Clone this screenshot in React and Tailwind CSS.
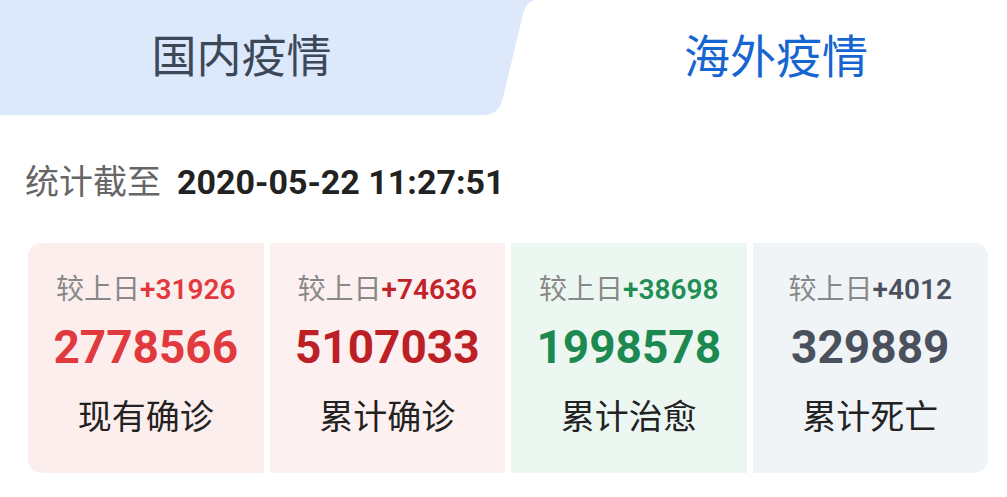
import React from 'react';

const font = { fontFamily: "Roboto, 'Noto Sans CJK SC', sans-serif" };

const cards = [
  { diff: '+31926', total: '2778566', label: '现有确诊', bg: 'bg-[#fdeeee] rounded-l-[14px]', diffColor: 'text-[#e2393f]', totalColor: 'text-[#e0393e]' },
  { diff: '+74636', total: '5107033', label: '累计确诊', bg: 'bg-[#fdf0f0]', diffColor: 'text-[#c1232a]', totalColor: 'text-[#bd1f26]' },
  { diff: '+38698', total: '1998578', label: '累计治愈', bg: 'bg-[#edf7f1]', diffColor: 'text-[#1f8f55]', totalColor: 'text-[#1c8a50]' },
  { diff: '+4012', total: '329889', label: '累计死亡', bg: 'bg-[#f0f4f7] rounded-r-[14px]', diffColor: 'text-[#4b525e]', totalColor: 'text-[#4a515d]' },
];

export default function App() {
  return (
    <div className="w-[1007px] h-[497px] bg-white overflow-hidden" style={font}>
      {/* tabs */}
      <div className="flex h-[115px]">
        <div className="w-[483px] bg-[#dce8fb] flex items-center justify-center text-[45px] text-[#3c4858]">
          国内疫情
        </div>
        <svg width="52" height="115" viewBox="0 0 52 115" className="shrink-0">
          <path d="M0 0 L52 0 Q42 2 39 18 L20 98 Q16 115 0 115 Z" fill="#dde8fb" />
        </svg>
        <div className="flex-1 flex items-center justify-center pl-[10px] text-[46px] text-[#1765d1]">
          海外疫情
        </div>
      </div>

      {/* update time */}
      <div className="mt-[47px] ml-[25px] flex items-center h-[40px] leading-[40px]">
        <span className="text-[34px] text-[#666]">统计截至</span>
        <span className="ml-[16px] text-[34px] font-bold text-[#222]">2020-05-22 11:27:51</span>
      </div>

      {/* stats */}
      <div className="mt-[41px] ml-[28px] mr-[19px] grid grid-cols-4 gap-[6px]">
        {cards.map((c) => (
          <div key={c.label} className={`${c.bg} h-[230px] flex flex-col items-center pt-[30px]`}>
            <div className="text-[28px] leading-[33px]">
              <span className="text-[#888]">较上日</span>
              <span className={`font-semibold ${c.diffColor}`}>{c.diff}</span>
            </div>
            <div className={`mt-[13px] text-[46px] leading-[56px] font-bold ${c.totalColor}`}>{c.total}</div>
            <div className="mt-[22px] text-[34px] leading-[40px] text-[#222]">{c.label}</div>
          </div>
        ))}
      </div>
    </div>
  );
}
